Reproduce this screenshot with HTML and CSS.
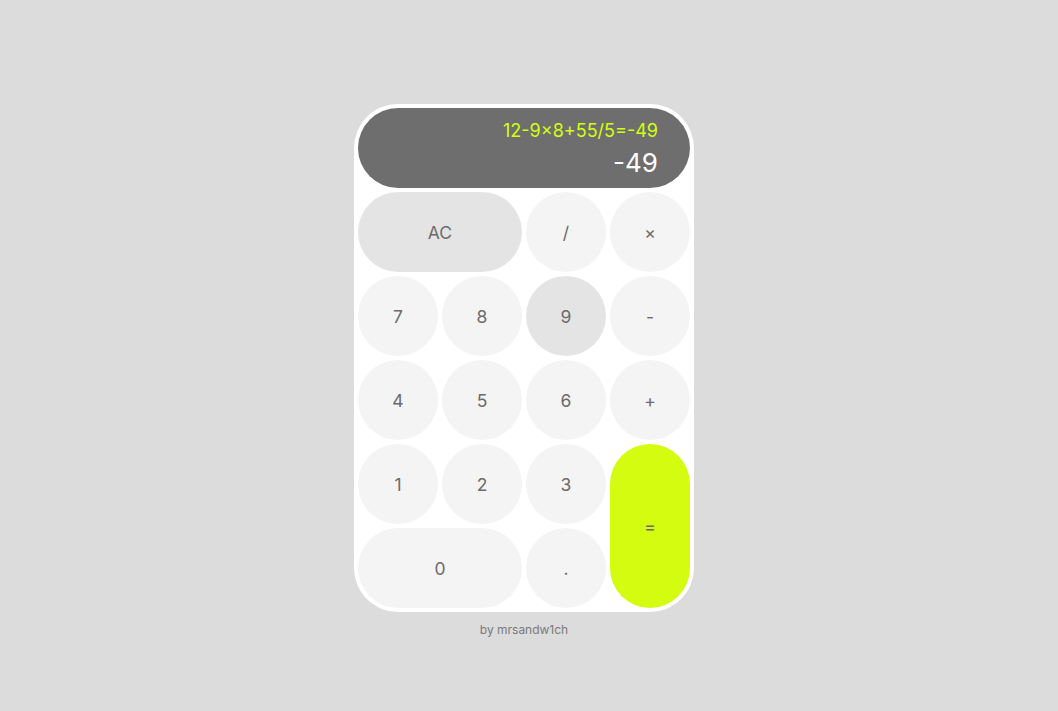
FILE: index.html
```html
<!DOCTYPE html>
<html>
<head>
<meta charset="utf-8">
<link rel="stylesheet" href="styles.css">
</head>
<body>
<main class="page">
  <div class="calc">
    <div class="display">
      <div class="expr">12-9×8+55/5=-49</div>
      <div class="result">-49</div>
    </div>
    <div class="keys">
      <button class="key wide dark">AC</button>
      <button class="key">/</button>
      <button class="key">×</button>
      <button class="key">7</button>
      <button class="key">8</button>
      <button class="key dark">9</button>
      <button class="key">-</button>
      <button class="key">4</button>
      <button class="key">5</button>
      <button class="key">6</button>
      <button class="key">+</button>
      <button class="key">1</button>
      <button class="key">2</button>
      <button class="key">3</button>
      <button class="key tall eq">=</button>
      <button class="key wide">0</button>
      <button class="key">.</button>
    </div>
  </div>
  <p class="credit">by mrsandw1ch</p>
</main>
</body>
</html>
```
FILE: styles.css
```css
html, body {
  margin: 0;
  padding: 0;
  background: #dcdcdc;
  font-family: Inter, "Noto Sans", sans-serif;
}
.page {
  display: flex;
  flex-direction: column;
  align-items: center;
  padding: 104px 10px 0 0;
}
.calc {
  width: 332px;
  padding: 4px;
  background: #ffffff;
  border-radius: 44px;
  display: flex;
  flex-direction: column;
  gap: 4px;
}
.display {
  height: 80px;
  box-sizing: border-box;
  background: #6e6e6e;
  border-radius: 40px;
  padding: 12px 32px 0 0;
  text-align: right;
}
.expr {
  color: #d4ff0f;
  font-size: 18px;
  line-height: 22px;
}
.result {
  color: #ffffff;
  font-size: 26px;
  line-height: 32px;
  margin-top: 5px;
}
.keys {
  display: grid;
  grid-template-columns: repeat(4, 80px);
  grid-auto-rows: 80px;
  gap: 4px;
}
.key {
  border: none;
  margin: 0;
  padding: 1px 0 0;
  border-radius: 40px;
  background: #f4f4f4;
  color: #6b6b6b;
  font-family: Inter, "Noto Sans", sans-serif;
  font-size: 17.5px;
}
.key.dark {
  background: #e4e4e4;
}
.key.wide {
  grid-column: span 2;
}
.key.tall {
  grid-row: span 2;
}
.key.eq {
  background: #d4fc10;
  grid-column: 4;
  grid-row: 4 / span 2;
}
.credit {
  margin: 10px 0 0;
  font-size: 12px;
  line-height: 16px;
  color: #7a7a7a;
}
```
